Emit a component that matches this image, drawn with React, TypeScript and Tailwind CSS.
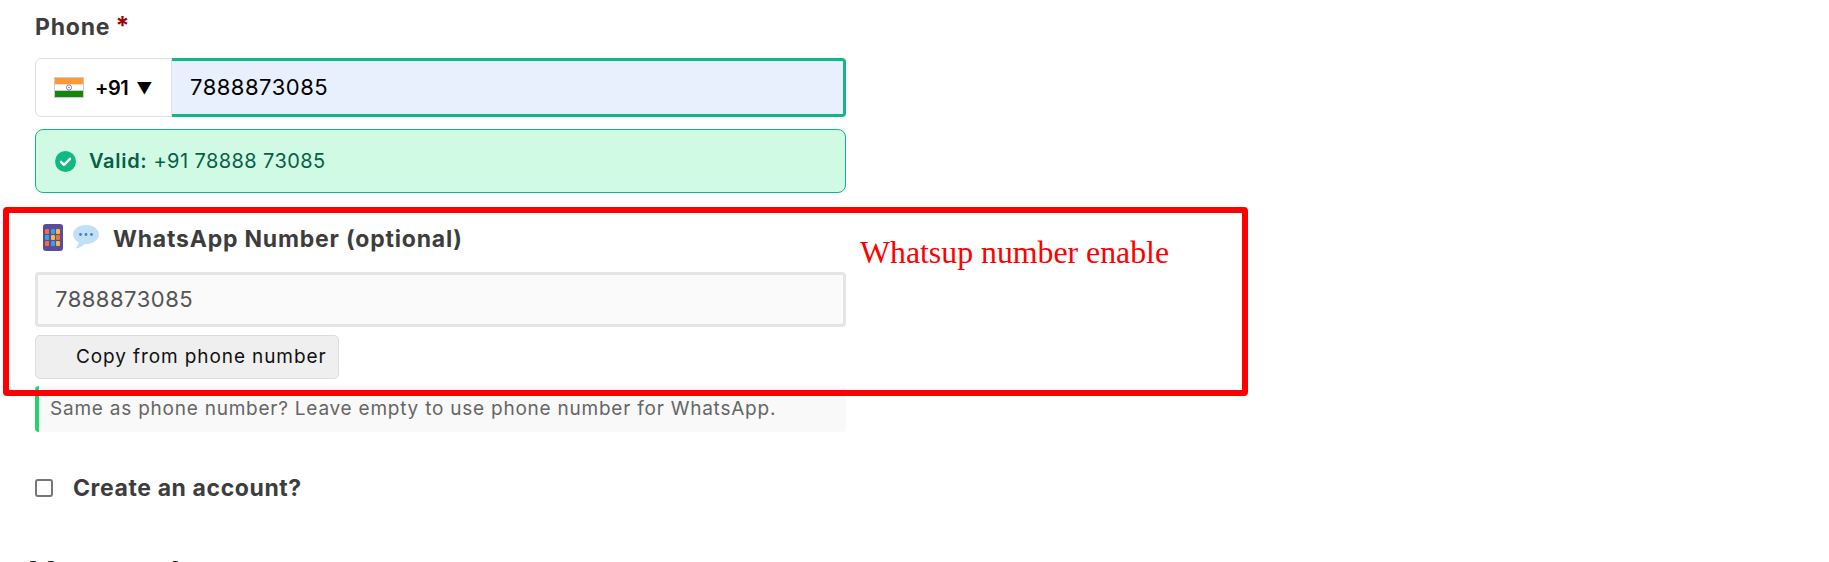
const font = "[font-family:Inter,'Noto_Sans',sans-serif]";

function IndiaFlag() {
  return (
    <svg width="30" height="21" viewBox="0 0 30 21" className="shrink-0">
      <rect x="0.5" y="0.5" width="29" height="20" fill="#fff" stroke="#ccc" />
      <rect x="1" y="1" width="28" height="6.3" fill="#ff9933" />
      <rect x="1" y="13.7" width="28" height="6.3" fill="#138808" />
      <circle cx="15" cy="10.5" r="2.6" fill="none" stroke="#000080" strokeWidth="0.7" opacity="0.7" />
      <circle cx="15" cy="10.5" r="0.7" fill="#000080" opacity="0.7" />
    </svg>
  );
}

function CalcEmoji() {
  const colors = ["#f2703a", "#2fa4e7", "#f5c02e", "#2fa4e7", "#f5c02e", "#f2703a", "#f2703a", "#2fa4e7", "#f5c02e"];
  return (
    <span className="inline-grid h-[27px] w-[20px] grid-cols-3 content-center justify-center gap-[1px] rounded-[3px] bg-[#5c4a9a] px-[2px]">
      {colors.map((c, i) => (
        <span key={i} className="h-[5px] w-[4px] rounded-[1px]" style={{ backgroundColor: c }} />
      ))}
    </span>
  );
}

function BubbleEmoji() {
  return (
    <svg width="28" height="27" viewBox="0 0 28 27">
      <path d="M14 1C6.8 1 1 5.200 1 10.500c0 3.300 2.200 6.100 5.500 7.800-.3 2.400-1.500 4.700-3 6.200 3.400-.3 7-2.200 9-4.600.5 0 1 .1 1.500.1 7.200 0 13-4.200 13-9.500S21.200 1 14 1z" fill="#bfe0f7" />
      <circle cx="8.500" cy="10.500" r="1.400" fill="#4a7fb0" />
      <circle cx="14" cy="10.500" r="1.400" fill="#4a7fb0" />
      <circle cx="19.500" cy="10.500" r="1.400" fill="#4a7fb0" />
    </svg>
  );
}

export default function App() {
  return (
    <div className={`relative h-[562px] overflow-hidden bg-white pl-[35px] text-[#3d3d3d] ${font}`}>
      <div className="w-[811px] pt-[12px]">
        <label className="block h-[30px] text-[23px] leading-[30px] font-bold tracking-[0.8px]">
          Phone <span className="ml-[-1px] text-[25px] leading-none text-[#a00000]">*</span>
        </label>

        <div className="mt-[16px] flex h-[59px]">
          <div className="flex w-[137px] items-center rounded-l-[6px] border border-[#e0e0e0] bg-white pl-[18px] text-black">
            <IndiaFlag />
            <span className="ml-[11px] text-[20px] font-semibold tracking-[-0.5px]">+91</span>
            <span className="ml-[8px] text-[16px] leading-none">▼</span>
          </div>
          <div className="flex flex-1 items-center rounded-r-[4px] border-y-[3px] border-r-[3px] border-[#10b981] bg-[#e8f0fe] pl-[18px] text-[22px] tracking-[0.5px] text-black">
            7888873085
          </div>
        </div>

        <div className="mt-[12px] flex h-[64px] items-center rounded-[8px] border border-[#10b981] bg-[#d1fae5] pl-[19px] text-[20px] tracking-[0.4px] text-[#065f46]">
          <svg width="21" height="21" viewBox="0 0 21 21" className="shrink-0">
            <circle cx="10.500" cy="10.500" r="10.500" fill="#10b981" />
            <path d="M6 10.800l3 3 6-6" fill="none" stroke="#fff" strokeWidth="2.400" strokeLinecap="round" strokeLinejoin="round" />
          </svg>
          <span className="ml-[13px]">
            <b className="font-semibold tracking-[0.7px]">Valid:</b> +91 78888 73085
          </span>
        </div>

        <div className="mt-[31px] flex h-[27px] items-center pl-[8px]">
          <CalcEmoji />
          <span className="ml-[9px]">
            <BubbleEmoji />
          </span>
          <span className="mt-[4px] ml-[13px] text-[23px] font-bold tracking-[0.8px]">WhatsApp Number (optional)</span>
        </div>

        <div className="mt-[21px] flex h-[55px] items-center rounded-[4px] border-[3px] border-[#e5e5e5] bg-[#fafafa] pl-[17px] text-[22px] tracking-[0.5px] text-[#555]">
          7888873085
        </div>

        <button className="mt-[8px] block h-[44px] w-[304px] rounded-[5px] border border-[#dcdcdc] bg-[#efefef] pl-[40px] text-left text-[19px] tracking-[0.9px] text-[#111]">
          Copy from phone number
        </button>

        <div className="mt-[7px] flex h-[46px] items-center rounded-[4px] border-l-[4px] border-[#22d36a] bg-[#f9f9f9] pl-[11px] text-[19px] tracking-[0.77px] text-[#666]">
          Same as phone number? Leave empty to use phone number for WhatsApp.
        </div>

        <label className="mt-[39px] flex items-center">
          <input type="checkbox" className="h-[18px] w-[18px] appearance-none rounded-[3px] border-2 border-[#767676] bg-white" />
          <span className="ml-[20px] text-[23px] font-bold tracking-[0.6px]">Create an account?</span>
        </label>

        <h3 className="mt-[41px] ml-[-6px] text-[36px] font-semibold tracking-[0.5px] text-[#222]">Your order</h3>
      </div>

      {/* review annotation drawn over the form */}
      <div className="absolute top-[207px] left-[3px] h-[189px] w-[1245px] rounded-[4px] border-[6px] border-[#ff0000]">
        <span className="absolute top-[23px] left-[851px] font-['Liberation_Serif',serif] text-[31.8px] leading-[34px] whitespace-nowrap text-[#ff0000]">
          Whatsup number enable
        </span>
      </div>
    </div>
  );
}
